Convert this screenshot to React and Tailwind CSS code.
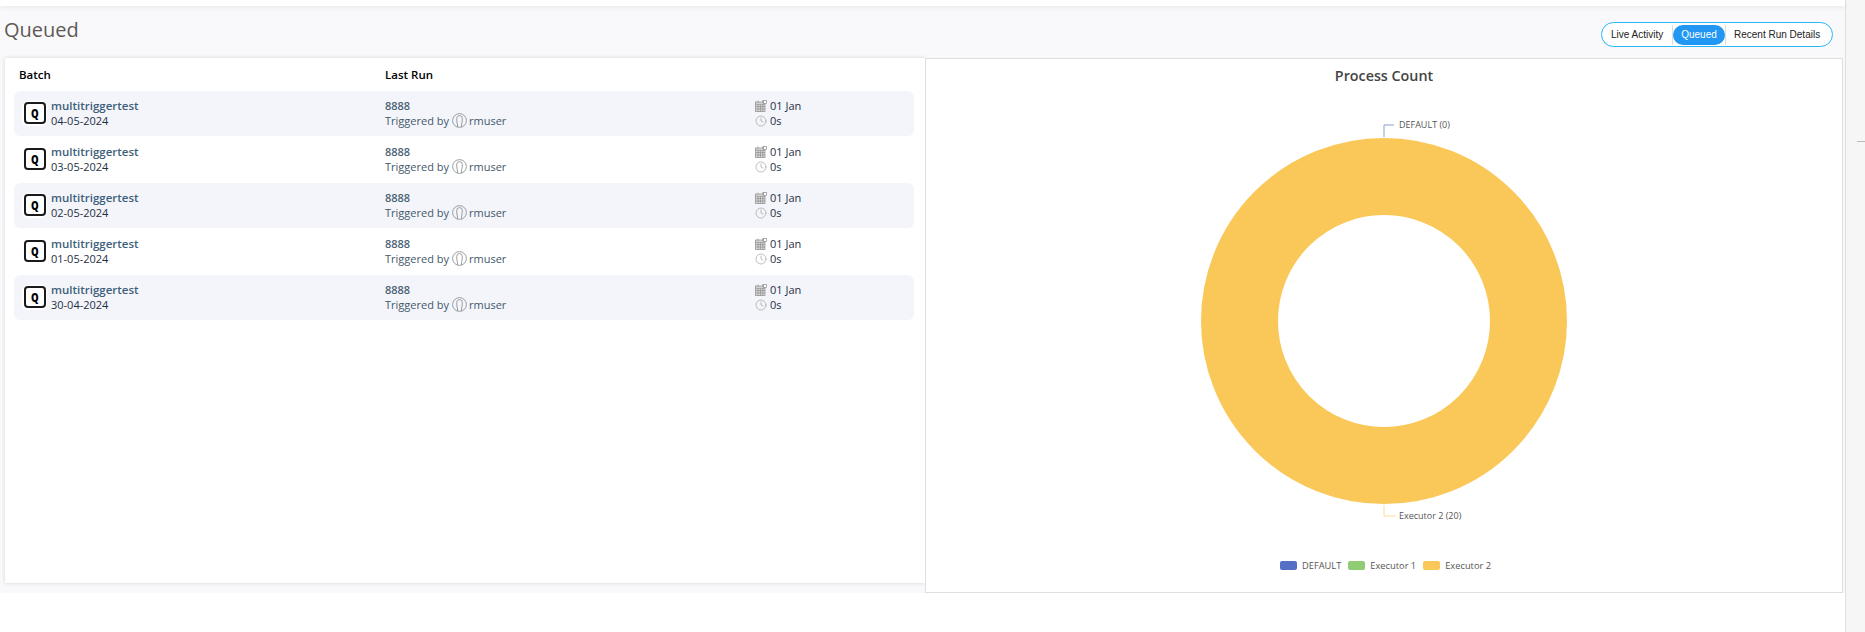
import React from 'react';
import { Clock } from 'lucide-react';

const runs = ['04-05-2024', '03-05-2024', '02-05-2024', '01-05-2024', '30-04-2024'];

const UserIcon = () => (
  <svg width="15" height="15" viewBox="0 0 15 15" fill="none" stroke="#8f9499" strokeWidth="0.9" className="shrink-0">
    <circle cx="7.5" cy="7.5" r="6.9" />
    <path d="M5.6 14 C5.6 11 4.7 9.5 4.7 5.4 a2.8 2.8 0 0 1 5.6 0 C10.3 9.5 9.4 11 9.4 14" />
  </svg>
);

const CalendarIcon = () => (
  <svg width="12" height="12" viewBox="0 0 12 12" fill="none" stroke="#8a8a8a" strokeWidth="0.7" className="shrink-0">
    <rect x="0.5" y="2" width="9.5" height="9.5" fill="#ddd" />
    <path d="M0.5 4.3H10M0.5 6.6H10M0.5 9H10M3 4.3V11.5M5.4 4.3V11.5M7.8 4.3V11.5M3 0.6V2.6M7.5 0.6V2.6" />
    <rect x="8.6" y="0.6" width="2.9" height="2.9" fill="#fff" />
  </svg>
);

const Row = ({ date, shaded }) => (
  <div className={`grid grid-cols-[371px_370px_1fr] h-[45px] rounded-md items-center pb-[1px] text-[11px] leading-[15px] text-[#1f3044] ${shaded ? 'bg-[#f3f5fa]' : ''}`}>
    <div className="flex items-center pl-[8px]">
      <div className="w-[25px] h-[25px] rounded-md bg-white flex items-center justify-center shrink-0">
        <div className="w-[22px] h-[22px] rounded-[4px] border-2 border-[#1a1a1a] flex items-center justify-center">
          <span className="text-[12px] font-extrabold text-black scale-x-[0.8]">Q</span>
        </div>
      </div>
      <div className="ml-[4px]">
        <div className="font-semibold text-[11.5px] text-[#3e5f7a]">multitriggertest</div>
        <div>{date}</div>
      </div>
    </div>
    <div>
      <div className="font-semibold text-[#4a6275]">8888</div>
      <div className="flex items-center text-[#44586a]">
        Triggered by
        <span className="ml-[3px] mr-[2px]"><UserIcon /></span>
        <span>rmuser</span>
      </div>
    </div>
    <div>
      <div className="flex items-center gap-[3px]"><CalendarIcon /> 01 Jan</div>
      <div className="flex items-center gap-[3px]"><Clock size={12} color="#a3a3a3" strokeWidth={1.4} /> 0s</div>
    </div>
  </div>
);

const Donut = () => (
  <svg width="917" height="440" viewBox="0 0 917 440" className="block">
    <circle cx="458" cy="230" r="144.5" fill="none" stroke="#f9c859" strokeWidth="77" />
    <path d="M458 46 V34 H468" fill="none" stroke="#8f9bc9" strokeWidth="1" />
    <text x="473" y="37" fontSize="9" fill="#555">DEFAULT (0)</text>
    <path d="M458 414 V425 H470" fill="none" stroke="#fbdf9c" strokeWidth="1" />
    <text x="473" y="428" fontSize="9" fill="#555">Executor 2 (20)</text>
  </svg>
);

const LegendItem = ({ color, label }) => (
  <div className="flex items-center gap-[5px]">
    <span className={`w-[17px] h-[9px] rounded-[2px] ${color}`} />
    <span>{label}</span>
  </div>
);

export default function App() {
  return (
    <div className="w-[1865px] h-[632px] flex bg-white overflow-hidden font-['Open_Sans',sans-serif]">
      <div className="w-[1845px]">
        <div className="h-[6px] bg-white relative shadow-[0_2px_5px_rgba(0,0,0,0.06)]" />
        <div className="h-[587px] bg-[#f9f9fc] pl-[5px] pr-[2px]">
          <div className="h-[52px] flex items-start justify-between">
            <h1 className="text-[20px] leading-[27px] pt-[10px] -ml-[1px] text-[#5f5a55]">Queued</h1>
            <div className="mt-[16px] mr-[10px] h-[25px] w-[232px] rounded-full border border-[#29b6f6] bg-white flex items-center pl-[9px] text-[10px] font-['Liberation_Sans',sans-serif] text-[#222]">
              <span className="w-[61px]">Live Activity</span>
              <div className="h-[20px] border-x border-[#ddd]">
                <span className="w-[52px] h-[20px] rounded-full bg-[#2196f3] text-white flex items-center justify-center">Queued</span>
              </div>
              <span className="ml-[8px]">Recent Run Details</span>
            </div>
          </div>
          <div className="flex items-start">
            <div className="w-[920px] h-[525px] bg-white shadow-[0_0_4px_rgba(0,0,0,0.15)] pl-[9px] pr-[11px]">
              <div className="h-[33px] grid grid-cols-[366px_1fr] items-center text-[11.5px] font-semibold text-black pl-[5px]">
                <div>Batch</div>
                <div>Last Run</div>
              </div>
              <div className="flex flex-col gap-[1px]">
                {runs.map((d, i) => (
                  <Row key={d} date={d} shaded={i % 2 === 0} />
                ))}
              </div>
            </div>
            <div className="w-[918px] h-[535px] bg-white border border-[#dfdfe3] flex flex-col">
              <div className="text-center text-[14.3px] font-semibold text-[#444] pt-[7px] leading-[20px]">Process Count</div>
              <div className="h-[5px]" />
              <Donut />
              <div className="flex justify-center gap-[7px] text-[9.3px] text-[#555] pt-[28px] pl-[3px]">
                <LegendItem color="bg-[#5470c6]" label="DEFAULT" />
                <LegendItem color="bg-[#91cc75]" label="Executor 1" />
                <LegendItem color="bg-[#fac858]" label="Executor 2" />
              </div>
            </div>
          </div>
        </div>
      </div>
      <div className="w-[20px] bg-[#f6f6f6] border-l border-[#e0e0e0] pt-[141px] pl-[11px]">
        <div className="h-px bg-[#bbb]" />
      </div>
    </div>
  );
}
